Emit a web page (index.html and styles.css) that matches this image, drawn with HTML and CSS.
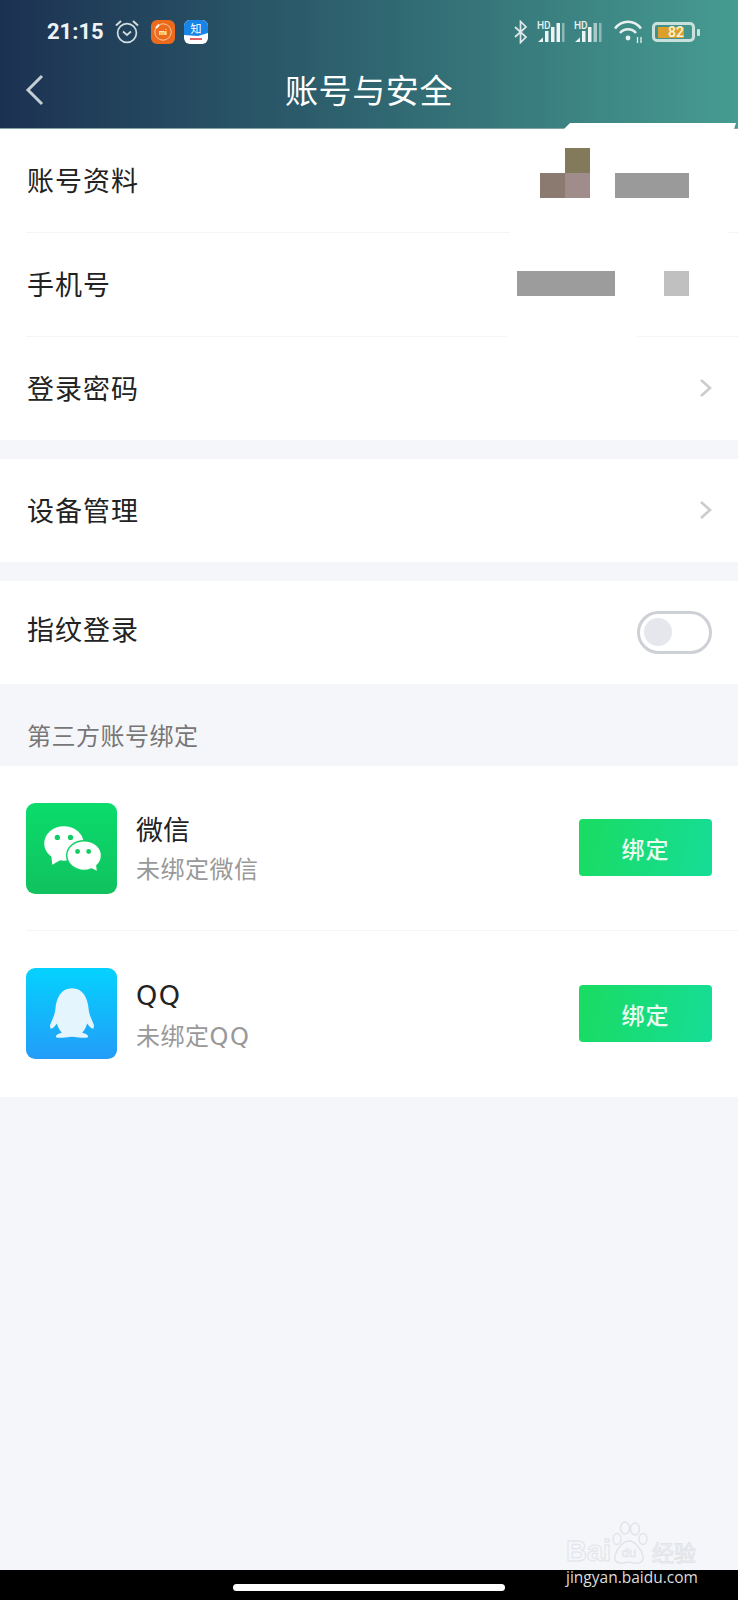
FILE: index.html
```html
<!DOCTYPE html>
<html lang="zh-CN">
<head>
    <meta charset="UTF-8">
    <meta name="viewport" content="width=device-width, initial-scale=1.0">
    <title>账号与安全</title>
    <link rel="stylesheet" href="styles.css">
</head>

<body>
    <header class="top">
        <div class="status">
            <div class="status-left">
                <span class="time">21:15</span>
                <svg class="alarm" width="26" height="26" viewBox="0 0 26 26" fill="none" stroke="#cfdde0" stroke-width="1.7">
                    <circle cx="13" cy="14" r="9.4"/>
                    <path d="M2 6.5 7 2M24 6.5 19 2" stroke-width="2"/>
                    <path d="M9 12.5l4 3.5 4-3.5"/>
                </svg>
                <svg class="app" width="24" height="24" viewBox="0 0 24 24">
                    <rect width="24" height="24" rx="6" fill="#ec6a1c"/>
                    <circle cx="12" cy="12" r="8.2" fill="none" stroke="#f8c9a0" stroke-width="1"/>
                    <path d="M5 8 8 4.8" stroke="#fff" stroke-width="2"/>
                    <text x="12" y="14.6" class="mi-text">mi</text>
                </svg>
                <svg class="app" width="24" height="24" viewBox="0 0 24 24">
                    <defs><clipPath id="zhClip"><rect width="24" height="24" rx="6"/></clipPath></defs>
                    <g clip-path="url(#zhClip)">
                        <rect width="24" height="24" fill="#fff"/>
                        <path d="M0 0H24V13L14 16 0 15Z" fill="#1784e8"/>
                        <text x="12" y="12.5" class="zh-text">知</text>
                        <rect x="6" y="18" width="12" height="2" fill="#e0606a"/>
                    </g>
                </svg>
            </div>
            <div class="status-right">
                <svg width="14" height="24" viewBox="0 0 14 24" fill="none" stroke="#dfe8ea" stroke-width="1.7">
                    <path d="M1 7l11 10-5.5 5.5V1.5L12 7 1 17"/>
                </svg>
                <svg class="signal" width="28" height="24" viewBox="0 0 28 24">
                    <text x="0" y="8.5" class="hd-text">HD</text>
                    <path d="M1 22l5-4.5V22z" fill="#eef4f4"/>
                    <rect x="8" y="11" width="3.5" height="11" fill="#eef4f4"/>
                    <rect x="14" y="7" width="3.5" height="15" fill="#eef4f4"/>
                    <rect x="19.5" y="3" width="3.5" height="19" fill="#eef4f4"/>
                    <rect x="25" y="3" width="2.5" height="19" fill="#8fb8b4"/>
                </svg>
                <svg class="signal" width="28" height="24" viewBox="0 0 28 24">
                    <text x="0" y="8.5" class="hd-text">HD</text>
                    <path d="M1 22l5-4.5V22z" fill="#eef4f4"/>
                    <rect x="8" y="11" width="3.5" height="11" fill="#eef4f4"/>
                    <rect x="14" y="7" width="3.5" height="15" fill="#eef4f4"/>
                    <rect x="19.5" y="3" width="3.5" height="19" fill="#a9c9c6"/>
                    <rect x="25" y="3" width="2.5" height="19" fill="#8fb8b4"/>
                </svg>
                <svg class="wifi" width="30" height="24" viewBox="0 0 30 24" fill="none" stroke="#e8f0f0" stroke-width="2.6">
                    <path d="M1 8.5C8-.5 20-.5 27 8.5"/>
                    <path d="M6 13C10.5 8 17.5 8 22 13"/>
                    <circle cx="14" cy="18" r="2.4" fill="#e8f0f0" stroke="none"/>
                    <path d="M23.5 17v6M27 17v6" stroke-width="1.3"/>
                </svg>
                <div class="battery">
                    <div class="battery-body"><span class="battery-level">82</span></div>
                    <span class="battery-nub"></span>
                </div>
            </div>
        </div>
        <div class="nav">
            <svg class="back" width="20" height="32" viewBox="0 0 20 32" fill="none" stroke="#c3cfd3" stroke-width="3">
                <path d="M17 2 3 16l14 14"/>
            </svg>
            <h1 class="title">账号与安全</h1>
        </div>
        <span class="notch"></span>
    </header>

    <main class="content">
        <section class="group">
            <div class="row">
                <span class="row-name">账号资料</span>
                <div class="mosaic mosaic-avatar">
                    <span class="cell cell-brown"></span>
                    <div class="cell-stack">
                        <span class="cell cell-olive"></span>
                        <span class="cell cell-pink"></span>
                    </div>
                    <span class="bar bar-wide"></span>
                </div>
            </div>
            <div class="divider divider-a"></div>
            <div class="row">
                <span class="row-name">手机号</span>
                <div class="mosaic mosaic-phone">
                    <span class="bar bar-long"></span>
                    <span class="bar bar-light"></span>
                </div>
            </div>
            <div class="divider divider-b"></div>
            <div class="row">
                <span class="row-name">登录密码</span>
                <svg class="chevron" width="14" height="20" viewBox="0 0 14 20" fill="none" stroke="#ccc" stroke-width="2.6">
                    <path d="M2 2l9 8-9 8"/>
                </svg>
            </div>
        </section>

        <section class="group">
            <div class="row">
                <span class="row-name">设备管理</span>
                <svg class="chevron" width="14" height="20" viewBox="0 0 14 20" fill="none" stroke="#ccc" stroke-width="2.6">
                    <path d="M2 2l9 8-9 8"/>
                </svg>
            </div>
        </section>

        <section class="group">
            <div class="row">
                <span class="row-name row-name-up">指纹登录</span>
                <div class="toggle"><span class="knob"></span></div>
            </div>
        </section>

        <div class="section-label">第三方账号绑定</div>

        <section class="bind-list">
            <div class="bind-row bind-row-first">
                <svg class="bind-icon" width="91" height="91" viewBox="0 0 90 90">
                    <defs>
                        <linearGradient id="wxBg" x1="0" y1="0" x2="0" y2="1">
                            <stop offset="0" stop-color="#0bdc6c"/>
                            <stop offset="1" stop-color="#10c25e"/>
                        </linearGradient>
                    </defs>
                    <rect width="90" height="90" rx="9" fill="url(#wxBg)"/>
                    <ellipse cx="37.5" cy="40" rx="19.5" ry="17" fill="#fff"/>
                    <path d="M25 52l1 9 9-5z" fill="#fff"/>
                    <ellipse cx="57.5" cy="52" rx="18" ry="15.5" fill="#0fcf64"/>
                    <ellipse cx="57.5" cy="52" rx="16.5" ry="14" fill="#fff"/>
                    <path d="M62 63l8 4-1-8z" fill="#fff"/>
                    <circle cx="31" cy="34" r="2.6" fill="#0fcf64"/>
                    <circle cx="44" cy="34" r="2.6" fill="#0fcf64"/>
                    <circle cx="51" cy="48" r="2.4" fill="#0fcf64"/>
                    <circle cx="62" cy="48" r="2.4" fill="#0fcf64"/>
                </svg>
                <div class="bind-text">
                    <div class="bind-name">微信</div>
                    <div class="bind-sub">未绑定微信</div>
                </div>
                <button class="bind-btn">绑定</button>
            </div>
            <div class="bind-row bind-row-last">
                <svg class="bind-icon" width="91" height="91" viewBox="0 0 90 90">
                    <defs>
                        <linearGradient id="qqBg" x1="0" y1="0" x2="0" y2="1">
                            <stop offset="0" stop-color="#04d2fe"/>
                            <stop offset="1" stop-color="#239cf8"/>
                        </linearGradient>
                    </defs>
                    <rect width="90" height="90" rx="9" fill="url(#qqBg)"/>
                    <path d="M45.5 20C35 20 30 29 29 41c-.5 5-3 10-5 15-.5 2 0 3 .5 4 2 0 4-2 6-5 1 4 3 7 5 9-4 1-6 2-6 4 0 1 3 1 7 1 3 0 6-1 9-1s6 1 9 1c4 0 7 0 7-1 0-2-2-3-6-4 2-2 4-5 5-9 2 3 4 5 6 5 .5-1 1-2 .5-4-2-5-4.5-10-5-15C61 29 56 20 45.5 20z" fill="#e4f5fd"/>
                </svg>
                <div class="bind-text">
                    <div class="bind-name"><span class="latin">QQ</span></div>
                    <div class="bind-sub">未绑定<span class="latin">QQ</span></div>
                </div>
                <button class="bind-btn">绑定</button>
            </div>
        </section>
    </main>

    <footer class="bottom">
        <span class="home-pill"></span>
    </footer>

    <div class="watermark">
        <div class="wm-logo">
            <span class="wm-word">Bai</span>
            <svg class="wm-paw" width="40" height="44" viewBox="0 0 38 44" fill="none" stroke="#e2e3e8" stroke-width="1.4">
                <ellipse cx="15" cy="7" rx="4.5" ry="6"/>
                <ellipse cx="25" cy="8" rx="4.5" ry="6"/>
                <ellipse cx="33" cy="18" rx="4" ry="5.5"/>
                <ellipse cx="7" cy="18" rx="4" ry="5.5"/>
                <path d="M19 20c-6 0-13 9-14 15-1 6 4 8 8 7 4-1 8-1 12 0s9-1 8-7c-1-6-8-15-14-15z"/>
                <text x="19" y="36" class="wm-du">du</text>
            </svg>
            <span class="wm-word wm-cn">经验</span>
        </div>
        <div class="wm-url">jingyan.baidu.com</div>
    </div>
</body>
</html>
```

FILE: styles.css
```css
* {
    box-sizing: border-box;
}
body {
    position: relative;
    margin: 0;
    width: 738px;
    height: 1600px;
    display: flex;
    flex-direction: column;
    overflow: hidden;
    background-color: #f5f6fa;
    font-family: "Noto Sans CJK SC", "Noto Sans", sans-serif;
    color: #222;
}

/* header */
.top {
    position: relative;
    height: 129px;
    flex: none;
    background: linear-gradient(90deg, #1c3152 0%, #2f6570 50%, #469c91 100%);
    border-bottom: 1px solid #7fa3a6;
}
.status {
    height: 64px;
    padding: 19px 38px 0 47px;
    display: flex;
    justify-content: space-between;
}
.status-left, .status-right {
    display: flex;
    align-items: flex-start;
}
.time {
    width: 67px;
    font-family: Roboto, sans-serif;
    font-weight: 700;
    font-size: 22px;
    line-height: 26px;
    color: #eef2f4;
}
.alarm {
    margin-right: 11px;
}
.app {
    margin: 1px 9px 0 0;
}
.mi-text {
    font-family: Roboto, sans-serif;
    font-weight: 700;
    font-size: 7px;
    fill: #fff;
    text-anchor: middle;
}
.zh-text {
    font-size: 11px;
    fill: #fff;
    text-anchor: middle;
}
.status-right svg {
    margin-right: 9px;
    margin-top: 1px;
}
.hd-text {
    font-family: Roboto, sans-serif;
    font-weight: 500;
    font-size: 10px;
    fill: #e8f0f0;
}
.status-right .wifi {
    margin-left: 3px;
    margin-right: 8px;
}
.battery {
    display: flex;
    align-items: center;
    margin-top: 3px;
}
.battery-body {
    width: 43px;
    height: 20px;
    padding: 1.5px 3px;
    border: 3px solid #c9e0dc;
    border-radius: 5px;
}
.battery-level {
    display: block;
    width: 26px;
    height: 11px;
    background-color: #dba02c;
    font-family: Roboto, sans-serif;
    font-weight: 500;
    font-size: 14px;
    line-height: 11px;
    text-align: right;
    color: #f8f3dc;
}
.battery-nub {
    width: 3px;
    height: 7px;
    margin-left: 2px;
    background-color: #c9e0dc;
    border-radius: 1px;
}
.nav {
    height: 64px;
    padding-left: 25px;
    display: flex;
    align-items: center;
    position: relative;
}
.back {
    margin-top: -13px;
}
.title {
    position: absolute;
    left: 0;
    right: 0;
    top: 0;
    margin: 0;
    text-align: center;
    font-weight: 400;
    font-size: 33px;
    line-height: 50px;
    letter-spacing: 0.6px;
    color: #fff;
}
.notch {
    position: absolute;
    right: 2px;
    bottom: -1px;
    width: 172px;
    height: 6px;
    background-color: #fff;
    clip-path: polygon(6px 0, 100% 0, calc(100% - 2px) 100%, 0 100%);
}

/* rows */
.content {
    flex: 1;
}
.group {
    background-color: #fff;
    margin-bottom: 19px;
}
.row {
    height: 103px;
    padding: 0 26px 0 27px;
    display: flex;
    align-items: center;
    justify-content: space-between;
}
.row-name {
    margin-bottom: 2px;
    font-size: 27px;
    letter-spacing: 1px;
}
.row-name-up {
    margin-bottom: 8px;
}
.divider {
    height: 1px;
    margin-left: 26px;
    background-color: #f5f5f7;
}
.divider-a {
    background: linear-gradient(90deg, #f5f5f7 484px, #fff 484px, #fff 702px, #f5f5f7 702px);
}
.divider-b {
    background: linear-gradient(90deg, #f5f5f7 481px, #fff 481px, #fff 611px, #f5f5f7 611px);
}
.chevron {
    margin: 0 -1px 2px 0;
}

/* pixelated values */
.mosaic {
    display: flex;
    align-items: flex-end;
    margin-right: 23px;
}
.mosaic-avatar {
    margin-bottom: 16px;
}
.mosaic-phone {
    margin-bottom: 2px;
}
.cell, .bar {
    display: block;
    height: 25px;
}
.cell {
    width: 25px;
}
.cell-brown {
    background-color: #8b7a70;
}
.cell-olive {
    background-color: #837a5b;
}
.cell-pink {
    background-color: #a08c8a;
}
.bar-wide {
    width: 74px;
    margin-left: 25px;
    background-color: #9a9a9a;
}
.bar-long {
    width: 98px;
    background-color: #9c9c9c;
}
.bar-light {
    width: 25px;
    margin-left: 49px;
    background-color: #c0c0c0;
}
.toggle {
    width: 75px;
    height: 43px;
    padding: 4px;
    border: 3px solid #cdd0d4;
    border-radius: 22px;
    background-color: #fff;
}
.knob {
    display: block;
    width: 28px;
    height: 28px;
    border-radius: 50%;
    background-color: #e6e7ec;
}

/* third party */
.section-label {
    height: 63px;
    padding: 15px 0 0 27px;
    font-size: 24px;
    line-height: 34px;
    letter-spacing: 0.5px;
    color: #777;
}
.bind-list {
    background-color: #fff;
}
.bind-row {
    height: 166px;
    margin-left: 26px;
    padding: 37px 26px 0 0;
    display: flex;
    align-items: flex-start;
}
.bind-row-first {
    height: 165px;
    border-bottom: 1px solid #f5f5f7;
}
.bind-row-last .bind-btn {
    margin-top: 17px;
}
.bind-icon {
    flex: none;
}
.bind-text {
    flex: 1;
    margin: 6px 0 0 19px;
}
.bind-name {
    font-size: 27px;
    line-height: 39px;
}
.bind-sub {
    font-size: 24px;
    line-height: 40px;
    letter-spacing: 0.5px;
    color: #999;
}
.latin {
    font-family: "DejaVu Sans", sans-serif;
    letter-spacing: 1.5px;
}
.bind-btn {
    width: 133px;
    height: 57px;
    margin-top: 16px;
    border: none;
    border-radius: 4px;
    background: linear-gradient(100deg, #19dc61, #16dd97);
    font-family: inherit;
    font-size: 23px;
    font-weight: 500;
    letter-spacing: 1px;
    color: #eafbf2;
}

/* system bar */
.bottom {
    flex: none;
    height: 30px;
    background-color: #000;
    display: flex;
    padding: 14px 0 0 233px;
}
.home-pill {
    width: 272px;
    height: 7px;
    border-radius: 4px;
    background-color: #fff;
}

/* watermark over the screenshot */
.watermark {
    position: absolute;
    left: 566px;
    top: 1521px;
    width: 134px;
}
.wm-logo {
    display: flex;
    align-items: flex-end;
    height: 44px;
}
.wm-word {
    font-family: "Liberation Sans", sans-serif;
    font-weight: 700;
    font-size: 29px;
    line-height: 28px;
    width: 44px;
    color: transparent;
    -webkit-text-stroke: 1px #e2e3e8;
}
.wm-cn {
    width: auto;
    margin-left: 3px;
    font-family: "Noto Sans CJK SC", sans-serif;
    font-weight: 400;
    font-size: 22px;
}
.wm-paw {
    flex: none;
    margin-left: -1px;
}
.wm-du {
    font-family: "Liberation Sans", sans-serif;
    font-size: 13px;
    fill: none;
    stroke: #e2e3e8;
    stroke-width: 0.7;
    text-anchor: middle;
}
.wm-url {
    margin-top: 2px;
    font-family: "Open Sans", sans-serif;
    font-size: 15.5px;
    line-height: 20px;
    white-space: nowrap;
    color: #dcdcdc;
}
```
